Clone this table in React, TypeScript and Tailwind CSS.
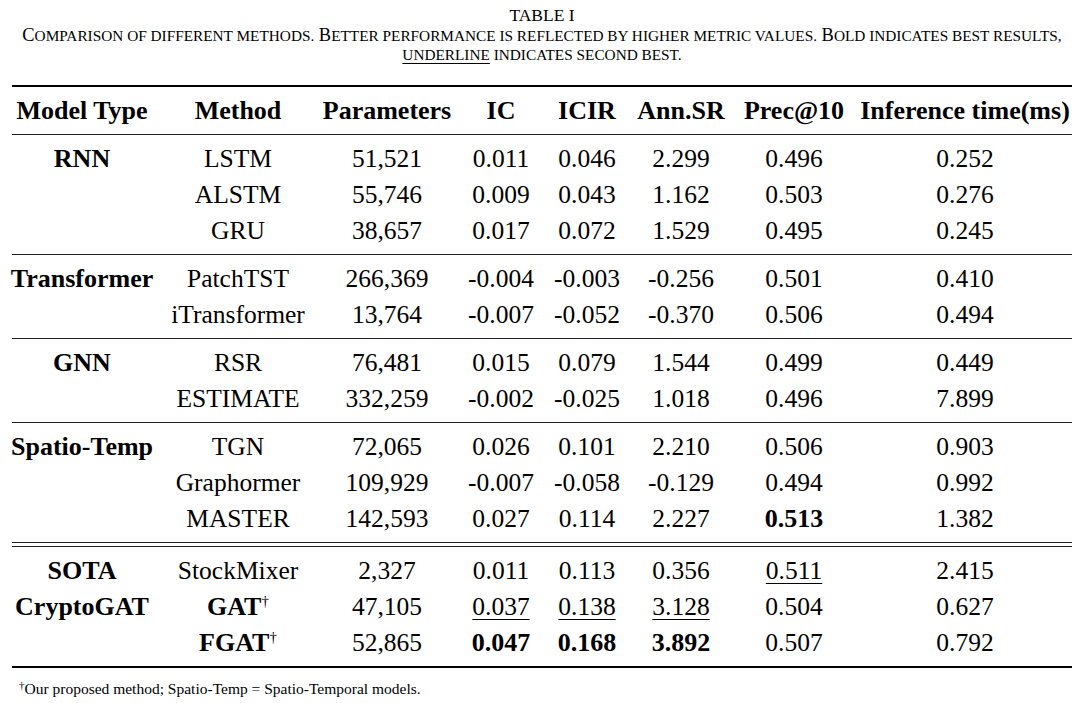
type Cell = { v: string; b?: boolean; u?: boolean; dag?: boolean };
type Row = { type?: string; cells: Cell[] };

const cols = "grid grid-cols-[140px_172px_126px_102px_70px_118px_108px_234px]";

const c = (v: string, b?: boolean, u?: boolean, dag?: boolean): Cell => ({ v, b, u, dag });

const groups: Row[][] = [
  [
    { type: "RNN", cells: [c("LSTM"), c("51,521"), c("0.011"), c("0.046"), c("2.299"), c("0.496"), c("0.252")] },
    { cells: [c("ALSTM"), c("55,746"), c("0.009"), c("0.043"), c("1.162"), c("0.503"), c("0.276")] },
    { cells: [c("GRU"), c("38,657"), c("0.017"), c("0.072"), c("1.529"), c("0.495"), c("0.245")] },
  ],
  [
    { type: "Transformer", cells: [c("PatchTST"), c("266,369"), c("-0.004"), c("-0.003"), c("-0.256"), c("0.501"), c("0.410")] },
    { cells: [c("iTransformer"), c("13,764"), c("-0.007"), c("-0.052"), c("-0.370"), c("0.506"), c("0.494")] },
  ],
  [
    { type: "GNN", cells: [c("RSR"), c("76,481"), c("0.015"), c("0.079"), c("1.544"), c("0.499"), c("0.449")] },
    { cells: [c("ESTIMATE"), c("332,259"), c("-0.002"), c("-0.025"), c("1.018"), c("0.496"), c("7.899")] },
  ],
  [
    { type: "Spatio-Temp", cells: [c("TGN"), c("72,065"), c("0.026"), c("0.101"), c("2.210"), c("0.506"), c("0.903")] },
    { cells: [c("Graphormer"), c("109,929"), c("-0.007"), c("-0.058"), c("-0.129"), c("0.494"), c("0.992")] },
    { cells: [c("MASTER"), c("142,593"), c("0.027"), c("0.114"), c("2.227"), c("0.513", true), c("1.382")] },
  ],
];

const last: Row[] = [
  { type: "SOTA", cells: [c("StockMixer"), c("2,327"), c("0.011"), c("0.113"), c("0.356"), c("0.511", false, true), c("2.415")] },
  { type: "CryptoGAT", cells: [c("GAT", true, false, true), c("47,105"), c("0.037", false, true), c("0.138", false, true), c("3.128", false, true), c("0.504"), c("0.627")] },
  { cells: [c("FGAT", true, false, true), c("52,865"), c("0.047", true), c("0.168", true), c("3.892", true), c("0.507"), c("0.792")] },
];

const headers = ["Model Type", "Method", "Parameters", "IC", "ICIR", "Ann.SR", "Prec@10", "Inference time(ms)"];

function DataRow({ row }: { row: Row }) {
  return (
    <div className={`${cols} h-[36px] items-center`}>
      <div className="flex justify-center whitespace-nowrap font-bold text-[26px]">{row.type ?? ""}</div>
      {row.cells.map((cell, i) => (
        <div key={i} className="flex justify-center whitespace-nowrap">
          <span
            className={`${cell.b ? "font-bold text-[26px]" : ""} ${cell.u ? "underline decoration-1 underline-offset-[4px]" : ""}`}
          >
            {cell.v}
            {cell.dag && <span className="relative -top-[9px] text-[15px] font-normal">†</span>}
          </span>
        </div>
      ))}
    </div>
  );
}

function Group({ rows }: { rows: Row[] }) {
  return (
    <div className="pt-[6px] pb-[5px]">
      {rows.map((r, i) => (
        <DataRow key={i} row={r} />
      ))}
    </div>
  );
}

// caption small caps: lowercase words set as smaller capitals
function Sc({ children, u }: { children: string; u?: boolean }) {
  return (
    <span className={`text-[15.3px] uppercase ${u ? "underline decoration-1 underline-offset-[3px]" : ""}`}>
      {children}
    </span>
  );
}

export default function App() {
  return (
    <div className="w-[1080px] h-[703px] bg-white text-black font-['Liberation_Serif','Times_New_Roman',serif] overflow-hidden">
      <div className="ml-[12px] w-[1060px] pt-[4px] text-center">
        <div className="text-[17.5px] leading-[22px]">TABLE I</div>
        <div className="text-[18.4px] leading-[19px] whitespace-nowrap">
          C<Sc>omparison of different methods.</Sc> B<Sc>etter performance is reflected by higher metric values.</Sc> B
          <Sc>old indicates best results,</Sc>
        </div>
        <div className="text-[18.4px] leading-[19px] whitespace-nowrap">
          <Sc u>underline</Sc>
          <Sc> indicates second best.</Sc>
        </div>
      </div>

      <div className="ml-[12px] mt-[21px] w-[1060px] text-[25.5px] leading-none">
        <div className="border-t-2 border-black" />
        <div className={`${cols} h-[47px] items-center font-bold text-[26px]`}>
          {headers.map((h) => (
            <div key={h} className="flex justify-center whitespace-nowrap">
              {h}
            </div>
          ))}
        </div>
        <div className="border-t border-[#222]" />
        {groups.map((g, i) => (
          <div key={i}>
            <Group rows={g} />
            <div className="border-t border-[#222]" />
          </div>
        ))}
        <div className="h-[3px]" />
        <div className="border-t border-[#222]" />
        <Group rows={last} />
        <div className="border-t-2 border-black" />
      </div>

      <div className="ml-[19px] mt-[12px] text-[15.5px] leading-[18px] whitespace-nowrap">
        <span className="relative -top-[5px] text-[11px]">†</span>Our proposed method; Spatio-Temp = Spatio-Temporal models.
      </div>
    </div>
  );
}
